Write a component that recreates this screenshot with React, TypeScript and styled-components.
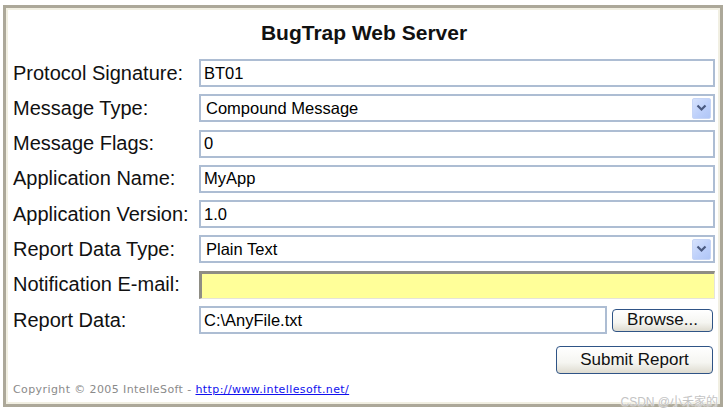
import React from 'react';
import styled, { createGlobalStyle } from 'styled-components';

const GlobalStyle = createGlobalStyle`
  html, body {
    margin: 0;
    padding: 0;
    background: #fff;
  }
  body {
    font-family: 'Liberation Sans', Arial, sans-serif;
    color: #000;
  }
`;

interface IField {
  label: string;
  value: string;
  kind: 'text' | 'select' | 'mail';
}

const fields: IField[] = [
  { label: 'Protocol Signature:', value: 'BT01', kind: 'text' },
  { label: 'Message Type:', value: 'Compound Message', kind: 'select' },
  { label: 'Message Flags:', value: '0', kind: 'text' },
  { label: 'Application Name:', value: 'MyApp', kind: 'text' },
  { label: 'Application Version:', value: '1.0', kind: 'text' },
  { label: 'Report Data Type:', value: 'Plain Text', kind: 'select' },
  { label: 'Notification E-mail:', value: '', kind: 'mail' },
];

function Chevron() {
  return (
    <svg width="11" height="8" viewBox="0 0 11 8">
      <path d="M1.5 1.5 L5.5 5.5 L9.5 1.5" fill="none" stroke="#4a5a80" strokeWidth="2.2" />
    </svg>
  );
}

export default function App() {
  return (
    <SPage>
      <GlobalStyle />
      <SFrame>
        <STitle>BugTrap Web Server</STitle>
        <SForm>
          {fields.map((f) => (
            <React.Fragment key={f.label}>
              <SLabel>{f.label}</SLabel>
              {f.kind === 'select' ? (
                <SSelect>
                  <span>{f.value}</span>
                  <SArrow>
                    <Chevron />
                  </SArrow>
                </SSelect>
              ) : (
                <SInput readOnly value={f.value} highlight={f.kind === 'mail'} />
              )}
            </React.Fragment>
          ))}
          <SLabel>Report Data:</SLabel>
          <SFileRow>
            <SInput readOnly value="C:\AnyFile.txt" highlight={false} />
            <SButton type="button" small>
              Browse...
            </SButton>
          </SFileRow>
        </SForm>
        <SSubmitRow>
          <SButton type="button" small={false}>
            Submit Report
          </SButton>
        </SSubmitRow>
        <SFooter>
          Copyright © 2005 IntelleSoft - <a href="#">http://www.intellesoft.net/</a>
        </SFooter>
      </SFrame>
      <SWatermark>CSDN @小禾家的</SWatermark>
    </SPage>
  );
}

const SPage = styled.div`
  position: relative;
  width: 728px;
  height: 414px;
  padding: 5px 0 0 3px;
  box-sizing: border-box;
`;
const SFrame = styled.div`
  box-sizing: border-box;
  width: 720px;
  height: 402px;
  border: 3px solid #aca899;
  box-shadow: inset 0 0 0 2px #f1efe2;
  padding: 13px 5px 0 7px;
  display: flex;
  flex-direction: column;
`;
const STitle = styled.div`
  height: 24px;
  line-height: 24px;
  text-align: center;
  font-size: 21px;
  font-weight: bold;
  color: #111;
`;
const SForm = styled.div`
  margin-top: 14px;
  display: grid;
  grid-template-columns: 186px 1fr;
  grid-auto-rows: 28px;
  row-gap: 7.3px;
  align-items: center;
`;
const SLabel = styled.div`
  font-size: 20px;
  white-space: nowrap;
  color: #111;
`;
const SInput = styled.input<{ highlight: boolean }>`
  box-sizing: border-box;
  width: 100%;
  height: 28px;
  margin: 0;
  padding: 0 0 0 3px;
  font-family: 'Liberation Sans', Arial, sans-serif;
  font-size: 16.5px;
  color: #000;
  outline: none;
  background: ${({ highlight }) => (highlight ? '#ffff99' : '#fff')};
  border: 2px solid #adbdd3;
  ${({ highlight }) =>
    highlight &&
    `
    border-top: 3px solid #8e8d84;
    border-left: 3px solid #8e8d84;
    border-right: 1px solid #e6e4da;
    border-bottom: 1px solid #e6e4da;
  `}
`;
const SSelect = styled.div`
  box-sizing: border-box;
  height: 28px;
  display: flex;
  align-items: center;
  justify-content: space-between;
  padding: 0 2px 0 5px;
  border: 2px solid #adbdd3;
  font-size: 16.5px;
  background: #fff;
`;
const SArrow = styled.div`
  width: 19px;
  height: 21px;
  display: flex;
  align-items: center;
  justify-content: center;
  border-radius: 2px;
  background: linear-gradient(135deg, #d6e2fd 0%, #bccffa 60%, #b0c6f6 100%);
  border: 1px solid #c6d5f6;
  box-sizing: border-box;
`;
const SFileRow = styled.div`
  display: flex;
  align-items: center;
  gap: 5px;
  padding-right: 2px;
`;
const SButton = styled.button<{ small: boolean }>`
  flex: none;
  box-sizing: border-box;
  width: ${({ small }) => (small ? '101px' : '157px')};
  height: ${({ small }) => (small ? '23px' : '28px')};
  padding: 0;
  border: 1.5px solid #2f5486;
  border-radius: 4px;
  background: linear-gradient(180deg, #ffffff 0%, #f5f5f1 60%, #dedbd0 100%);
  font-family: 'Liberation Sans', Arial, sans-serif;
  font-size: 17px;
  color: #111;
`;
const SSubmitRow = styled.div`
  display: flex;
  justify-content: flex-end;
  padding-right: 2px;
  margin-top: 12px;
`;
const SFooter = styled.div`
  margin-top: 9px;
  font-family: 'DejaVu Sans', Verdana, sans-serif;
  font-size: 11px;
  letter-spacing: 0.4px;
  color: #8a8a8a;
  white-space: nowrap;
  > a {
    color: #1010ee;
  }
`;
const SWatermark = styled.div`
  position: absolute;
  right: 10px;
  bottom: 5px;
  font-family: 'Liberation Sans', 'Noto Sans CJK SC', sans-serif;
  font-size: 12px;
  color: #c4c4c4;
  text-shadow: 0 0 1px #fff, 0 0 2px #fff;
`;
